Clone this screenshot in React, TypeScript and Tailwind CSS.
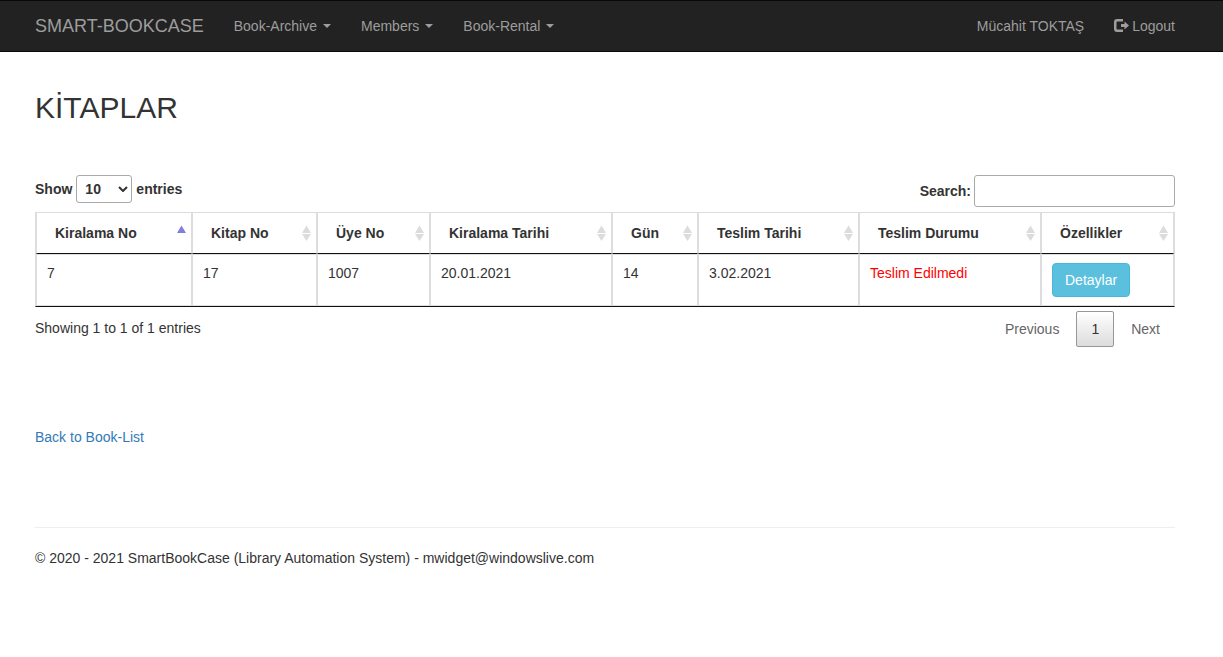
import { useState } from "react";

type SortState = "asc" | "none";

const columns: { label: string; width: string; sort: SortState }[] = [
  { label: "Kiralama No", width: "w-[156px]", sort: "asc" },
  { label: "Kitap No", width: "w-[125px]", sort: "none" },
  { label: "Üye No", width: "w-[113px]", sort: "none" },
  { label: "Kiralama Tarihi", width: "w-[182px]", sort: "none" },
  { label: "Gün", width: "w-[86px]", sort: "none" },
  { label: "Teslim Tarihi", width: "w-[161px]", sort: "none" },
  { label: "Teslim Durumu", width: "w-[182px]", sort: "none" },
  { label: "Özellikler", width: "w-[133px]", sort: "none" },
];

const rental = ["7", "17", "1007", "20.01.2021", "14", "3.02.2021"];

function Caret() {
  return (
    <svg width="8" height="4" viewBox="0 0 8 4" className="fill-current" aria-hidden="true">
      <path d="M0 0h8L4 4z" />
    </svg>
  );
}

function SortIcon({ sort }: { sort: SortState }) {
  return (
    <svg width="9" height="16" viewBox="0 0 9 16" className="shrink-0" aria-hidden="true">
      <path d="M4.5 0.5L9 8H0z" fill={sort === "asc" ? "#7f7fe0" : "#dcdcdc"} />
      {sort === "none" && <path d="M4.5 16L9 9H0z" fill="#dcdcdc" />}
    </svg>
  );
}

function LogoutIcon() {
  return (
    <svg width="15" height="14" viewBox="0 0 15 14" className="fill-current" aria-hidden="true">
      <path d="M9 0v2.500H3.500a1 1 0 0 0-1 1v6a1 1 0 0 0 1 1H9V13H3a3 3 0 0 1-3-3V3a3 3 0 0 1 3-3z" />
      <path d="M10.500 2.500L15 6.500l-4.500 4V8H7V5h3.500z" />
    </svg>
  );
}

function NavMenu({ label }: { label: string }) {
  return (
    <button type="button" className="flex items-center gap-1.5 px-[15px] py-[15px] hover:text-white">
      {label}
      <Caret />
    </button>
  );
}

function Navbar() {
  return (
    <nav className="border-y border-[#080808] bg-[#222] text-[#9d9d9d]">
      <div className="flex flex-wrap items-center pl-5 pr-[33px]">
        <a href="#" className="p-[15px] text-lg leading-5 hover:text-white">
          SMART-BOOKCASE
        </a>
        <NavMenu label="Book-Archive" />
        <NavMenu label="Members" />
        <NavMenu label="Book-Rental" />
        <div className="ml-auto flex">
          <a href="#" className="p-[15px] hover:text-white">
            Mücahit TOKTAŞ
          </a>
          <a href="#" className="flex items-center gap-[3px] p-[15px] hover:text-white">
            <LogoutIcon />
            Logout
          </a>
        </div>
      </div>
    </nav>
  );
}

export default function App() {
  const [search, setSearch] = useState("");
  const [pageSize, setPageSize] = useState("10");

  return (
    <div className="bg-white font-['Liberation_Sans',Arial,sans-serif] text-[14px] leading-5 text-[#333]">
      <Navbar />
      <div className="pl-[35px] pr-12">
        <main>
          <h2 className="pt-[39px] text-[30px] leading-[33px]">KİTAPLAR</h2>

          <div className="mt-[51px] flex items-start justify-between font-bold">
            <label className="flex items-center gap-1">
              Show
              <span className="relative flex items-center">
                <select
                  value={pageSize}
                  onChange={(e) => setPageSize(e.target.value)}
                  className="h-7 w-14 appearance-none rounded-[3px] border border-[#aaa] bg-transparent px-2 font-bold"
                >
                  <option>10</option>
                  <option>25</option>
                  <option>50</option>
                  <option>100</option>
                </select>
                <svg
                  width="10"
                  height="6"
                  viewBox="0 0 10 6"
                  className="pointer-events-none absolute right-1 fill-none stroke-current stroke-2"
                  aria-hidden="true"
                >
                  <path d="M1 1l4 4 4-4" />
                </svg>
              </span>
              entries
            </label>
            <label className="flex items-center gap-[3px]">
              Search:
              <input
                type="search"
                value={search}
                onChange={(e) => setSearch(e.target.value)}
                className="h-8 w-[201px] rounded-[3px] border border-[#aaa] bg-transparent px-1 font-normal"
              />
            </label>
          </div>

          <table className="mt-[5px] w-full table-fixed border-separate border-spacing-0 border border-[#ddd] border-b-[#111] text-left">
            <thead>
              <tr>
                {columns.map((c) => (
                  <th
                    key={c.label}
                    aria-sort={c.sort === "asc" ? "ascending" : "none"}
                    className={`${c.width} border-x border-b border-x-[#ddd] border-b-[#111] py-2.5 pl-[18px] pr-[5px] font-bold`}
                  >
                    <span className="flex items-center justify-between whitespace-nowrap">
                      {c.label}
                      <SortIcon sort={c.sort} />
                    </span>
                  </th>
                ))}
              </tr>
            </thead>
            <tbody>
              <tr className="align-top">
                {rental.map((value) => (
                  <td key={value} className="border border-[#ddd] px-2.5 py-2">
                    {value}
                  </td>
                ))}
                <td className="border border-[#ddd] px-2.5 py-2 text-[#f00]">Teslim Edilmedi</td>
                <td className="border border-[#ddd] px-2.5 py-2">
                  <a
                    href="#"
                    className="block w-fit rounded-[4px] border border-[#46b8da] bg-[#5bc0de] px-3 py-1.5 text-white"
                  >
                    Detaylar
                  </a>
                </td>
              </tr>
            </tbody>
          </table>

          <div className="flex items-start justify-between pt-1">
            <p className="pt-[7px]">Showing 1 to 1 of 1 entries</p>
            <div className="flex gap-0.5">
              <button type="button" className="border border-transparent px-3.5 py-[7px] text-[#666]">
                Previous
              </button>
              <button
                type="button"
                className="rounded-[2px] border border-[#979797] bg-linear-to-b from-white to-[#dcdcdc] px-3.5 py-[7px]"
              >
                1
              </button>
              <button type="button" className="border border-transparent px-3.5 py-[7px] text-[#666]">
                Next
              </button>
            </div>
          </div>

          <a href="#" className="mt-20 block w-fit text-[#337ab7] hover:underline">
            Back to Book-List
          </a>
        </main>

        <footer className="mt-20 border-t border-[#eee] pt-5">
          <p>© 2020 - 2021 SmartBookCase (Library Automation System) - mwidget@windowslive.com</p>
        </footer>
      </div>
    </div>
  );
}
